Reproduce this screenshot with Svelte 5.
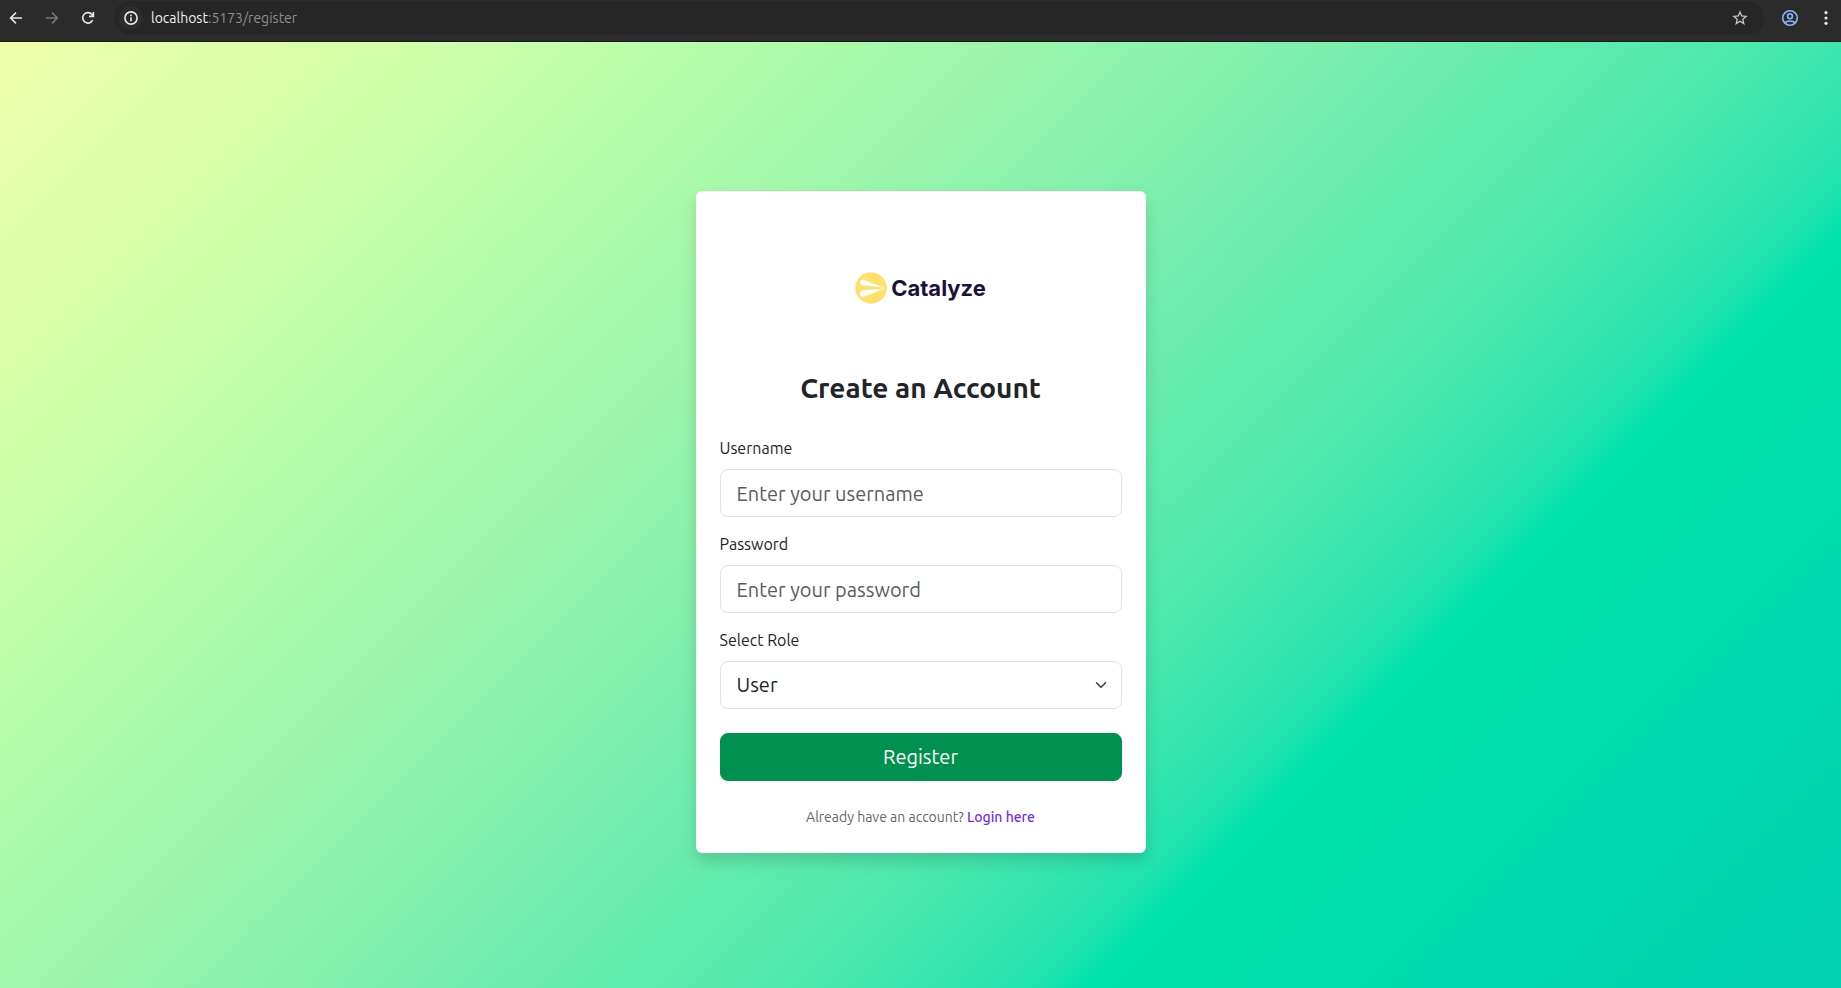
<script>
  let username = $state('');
  let password = $state('');
  let role = $state('user');
</script>

<div class="window">
  <header class="toolbar">
    <nav class="history" aria-label="History">
      <button type="button" aria-label="Back">
        <svg viewBox="0 0 16 16"><path d="M14 8H3M8 2.6 2.6 8 8 13.4" /></svg>
      </button>
      <button type="button" class="dim" aria-label="Forward">
        <svg viewBox="0 0 16 16"><path d="M2 8h11M8 2.6 13.4 8 8 13.4" /></svg>
      </button>
      <button type="button" aria-label="Reload">
        <svg viewBox="0 0 16 16"><path d="M12.6 10.2A5.2 5.2 0 1 1 12 4.6L13.4 6M13.4 2v4.4H9" /></svg>
      </button>
    </nav>
    <div class="address">
      <button type="button" class="info" aria-label="Site information">
        <svg viewBox="0 0 16 16"><circle cx="8" cy="8" r="6.1" /><path d="M8 7.3v3.9M8 4.6v1.6" /></svg>
      </button>
      <span class="url"><b>localhost</b>:5173/register</span>
      <button type="button" class="star" aria-label="Bookmark this page">
        <svg viewBox="0 0 16 16"><path d="m8 1.9 1.7 4.1 4.4.4-3.3 2.9 1 4.3L8 11.3l-3.8 2.3 1-4.3L1.9 6.4l4.4-.4z" /></svg>
      </button>
    </div>
    <div class="tools">
      <button type="button" class="profile" aria-label="Profile">
        <svg viewBox="0 0 18 18"><circle cx="9" cy="9" r="7.3" /><circle cx="9" cy="7.2" r="2.4" /><path d="M3.8 13.9c2.6-2.5 7.8-2.5 10.4 0" /></svg>
      </button>
      <button type="button" class="menu" aria-label="Menu">
        <svg viewBox="0 0 16 16"><circle cx="8" cy="2.7" r="1.6" /><circle cx="8" cy="8" r="1.6" /><circle cx="8" cy="13.3" r="1.6" /></svg>
      </button>
    </div>
  </header>

  <main>
    <section class="card">
      <div class="logo">
        <svg viewBox="0 0 32 32" aria-hidden="true">
          <circle cx="16" cy="16" r="15.7" fill="#ffe06a" />
          <path d="M8.2 7.7 30 15.6 8 13.6C3.7 12.8 4.4 7 8.2 7.7zM8.2 25.1 30 16.5 8 18.3C3.7 19.2 4.4 25.6 8.2 25.1z" fill="#fff" />
        </svg>
        <span>Catalyze</span>
      </div>
      <h1>Create an Account</h1>
      <form onsubmit={(e) => e.preventDefault()}>
        <div class="field">
          <label for="username">Username</label>
          <input id="username" type="text" placeholder="Enter your username" bind:value={username} />
        </div>
        <div class="field">
          <label for="password">Password</label>
          <input id="password" type="password" placeholder="Enter your password" bind:value={password} />
        </div>
        <div class="field">
          <label for="role">Select Role</label>
          <div class="select">
            <select id="role" bind:value={role}>
              <option value="user">User</option>
              <option value="admin">Admin</option>
            </select>
            <svg viewBox="0 0 16 16" aria-hidden="true"><path d="m2 5 6 6 6-6" /></svg>
          </div>
        </div>
        <button type="submit" class="submit">Register</button>
      </form>
      <p>Already have an account? <a href="/login">Login here</a></p>
    </section>
  </main>
</div>

<style>
  :global(body) {
    margin: 0;
  }

  .window {
    display: flex;
    flex-direction: column;
    min-height: 100vh;
    font-family: Ubuntu, 'Noto Sans', sans-serif;
    color: #212529;
  }

  .window * {
    box-sizing: border-box;
  }

  .toolbar {
    display: flex;
    align-items: center;
    height: 42px;
    padding: 0 7px 6px 8px;
    background: #2b2b2b;
    border-bottom: 1px solid #161616;
  }

  .toolbar button {
    display: flex;
    padding: 0;
    border: 0;
    background: none;
    color: #e8e8e8;
  }

  .toolbar svg {
    width: 16px;
    height: 16px;
    fill: none;
    stroke: currentColor;
    stroke-width: 1.6;
  }

  .history {
    display: flex;
    gap: 20px;
    margin-right: 18px;
  }

  .toolbar .dim {
    color: #777;
  }

  .address {
    display: flex;
    flex: 1;
    align-items: center;
    height: 34px;
    padding: 0 16px 0 5px;
    border-radius: 17px;
    background: #262626;
  }

  .toolbar .info {
    padding: 4px;
    border-radius: 50%;
    background: #2c2c2c;
  }

  .url {
    flex: 1;
    margin-left: 8px;
    font-size: 14px;
    color: #8f8f8f;
  }

  .url b {
    font-weight: 400;
    color: #f1f1f1;
  }

  .toolbar .star {
    color: #c7c7c7;
  }

  .star svg {
    stroke-width: 1.3;
  }

  .tools {
    display: flex;
    align-items: center;
    gap: 19px;
    margin-left: 17px;
  }

  .toolbar .profile {
    color: #8ab4f8;
  }

  .profile svg {
    width: 18px;
    height: 18px;
  }

  .menu svg {
    fill: currentColor;
    stroke: none;
  }

  main {
    display: flex;
    flex: 1;
    align-items: center;
    justify-content: center;
    padding: 24px;
    background: linear-gradient(
      135deg,
      #f1ffa9 0%,
      #ccffaa 17%,
      #b8fdaa 24%,
      #a4f8ab 33%,
      #8ef3ac 41%,
      #7eefad 47%,
      #5eebae 57%,
      #4ae8ae 63%,
      #34e5ae 68%,
      #20e4ae 71%,
      #00e1ae 73%,
      #00daae 85%,
      #00d1ae 100%
    );
  }

  .card {
    width: 100%;
    max-width: 450px;
    padding: 24px;
    margin-top: 14px;
    border-radius: 6px;
    background: #fff;
    box-shadow: 0 8px 16px rgba(0, 0, 0, 0.15);
  }

  .logo {
    display: flex;
    align-items: center;
    justify-content: center;
    gap: 4px;
    height: 146px;
    font: 700 22px/32px Inter, sans-serif;
    color: #1a1238;
  }

  .logo svg {
    width: 32px;
    height: 32px;
  }

  h1 {
    margin: 10px 0 32px;
    font-size: 28px;
    font-weight: 600;
    line-height: 34px;
    text-align: center;
  }

  .field {
    margin-bottom: 16px;
  }

  label {
    display: block;
    margin-bottom: 10px;
    font-size: 16px;
    line-height: 22px;
  }

  input,
  select,
  .submit {
    display: block;
    width: 100%;
    height: 48px;
    padding: 8px 16px;
    border: 1px solid #dee2e6;
    border-radius: 8px;
    background: #fff;
    color: #212529;
    font: inherit;
    font-size: 20px;
    line-height: 30px;
  }

  input::placeholder {
    color: #595c5f;
    opacity: 1;
  }

  .select {
    display: grid;
    align-items: center;
  }

  .select > * {
    grid-area: 1 / 1;
  }

  select {
    appearance: none;
  }

  .select svg {
    justify-self: end;
    width: 12px;
    height: 12px;
    margin-right: 15px;
    fill: none;
    stroke: #343a40;
    stroke-width: 2;
    stroke-linecap: round;
    stroke-linejoin: round;
    pointer-events: none;
  }

  .submit {
    margin-top: 24px;
    border-color: #009150;
    background: #009150;
    color: #fff;
  }

  p {
    margin: 24px 0 0;
    font-size: 14px;
    line-height: 24px;
    text-align: center;
    color: #5f666d;
  }

  a {
    color: #6f2cff;
    font-weight: 500;
    text-decoration: none;
  }
</style>
